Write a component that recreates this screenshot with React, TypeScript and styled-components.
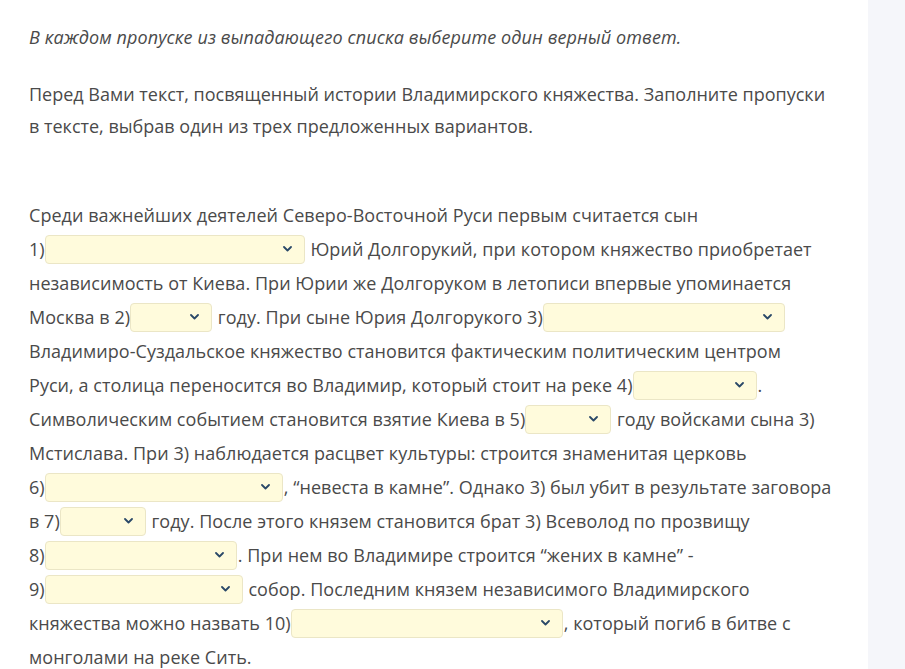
import React from 'react'
import styled, { createGlobalStyle } from 'styled-components'

const GlobalStyle = createGlobalStyle`
  html, body {
    margin: 0;
    padding: 0;
    background: #ffffff;
  }
  body {
    font-family: 'Open Sans', 'Noto Sans', sans-serif;
    color: #4a4a4a;
  }
`

const Page = styled.div`
  display: grid;
  grid-template-columns: 868px 1fr;
  min-height: 669px;
  width: 905px;
  overflow: hidden;
`

const Content = styled.main`
  background: #ffffff;
  padding: 21px 0 0 29px;
`

const Side = styled.aside`
  background: #f5f6fa;
`

const Instruction = styled.p`
  margin: 0;
  font-size: 18px;
  font-style: italic;
  line-height: 32px;
  letter-spacing: 0.1px;
  white-space: nowrap;
`

const Intro = styled.p`
  margin: 25px 0 0;
  font-size: 18px;
  line-height: 32px;
  white-space: nowrap;
`

const Passage = styled.p`
  margin: 56px 0 0;
  font-size: 18px;
  line-height: 34px;
  letter-spacing: 0.05px;
  white-space: nowrap;
`

const SelectBox = styled.span<{ $w: number }>`
  display: inline-flex;
  align-items: center;
  justify-content: flex-end;
  box-sizing: border-box;
  width: ${(p) => p.$w}px;
  height: 29px;
  margin-right: 1px;
  padding-right: 12px;
  vertical-align: middle;
  background: #fffbdc;
  border: 1px solid #ebe6c6;
  border-radius: 4px;
  position: relative;
  top: -2px;
`

function Chevron() {
  return (
    <svg width="9" height="6" viewBox="0 0 9 6" fill="none">
      <path d="M1 1l3.5 3.5L8 1" stroke="#2a4868" strokeWidth="1.8" strokeLinecap="round" strokeLinejoin="round" />
    </svg>
  )
}

function Gap({ w }: { w: number }) {
  return (
    <SelectBox $w={w}>
      <Chevron />
    </SelectBox>
  )
}

export default function App() {
  return (
    <>
      <GlobalStyle />
      <Page>
        <Content>
          <Instruction>В каждом пропуске из выпадающего списка выберите один верный ответ.</Instruction>
          <Intro>
            Перед Вами текст, посвященный истории Владимирского княжества. Заполните пропуски
            <br />в тексте, выбрав один из трех предложенных вариантов.
          </Intro>
          <Passage>
            Среди важнейших деятелей Северо-Восточной Руси первым считается сын
            <br />
            1)<Gap w={260} /> Юрий Долгорукий, при котором княжество приобретает
            <br />
            независимость от Киева. При Юрии же Долгоруком в летописи впервые упоминается
            <br />
            Москва в 2)<Gap w={82} /> году. При сыне Юрия Долгорукого 3)<Gap w={242} />
            <br />
            Владимиро-Суздальское княжество становится фактическим политическим центром
            <br />
            Руси, а столица переносится во Владимир, который стоит на реке 4)<Gap w={124} />.
            <br />
            Символическим событием становится взятие Киева в 5)<Gap w={86} /> году войсками сына 3)
            <br />
            Мстислава. При 3) наблюдается расцвет культуры: строится знаменитая церковь
            <br />
            6)<Gap w={238} />, “невеста в камне”. Однако 3) был убит в результате заговора
            <br />
            в 7)<Gap w={86} /> году. После этого князем становится брат 3) Всеволод по прозвищу
            <br />
            8)<Gap w={192} />. При нем во Владимире строится “жених в камне” -
            <br />
            9)<Gap w={198} /> собор. Последним князем независимого Владимирского
            <br />
            княжества можно назвать 10)<Gap w={272} />, который погиб в битве с
            <br />
            монголами на реке Сить.
          </Passage>
        </Content>
        <Side />
      </Page>
    </>
  )
}
